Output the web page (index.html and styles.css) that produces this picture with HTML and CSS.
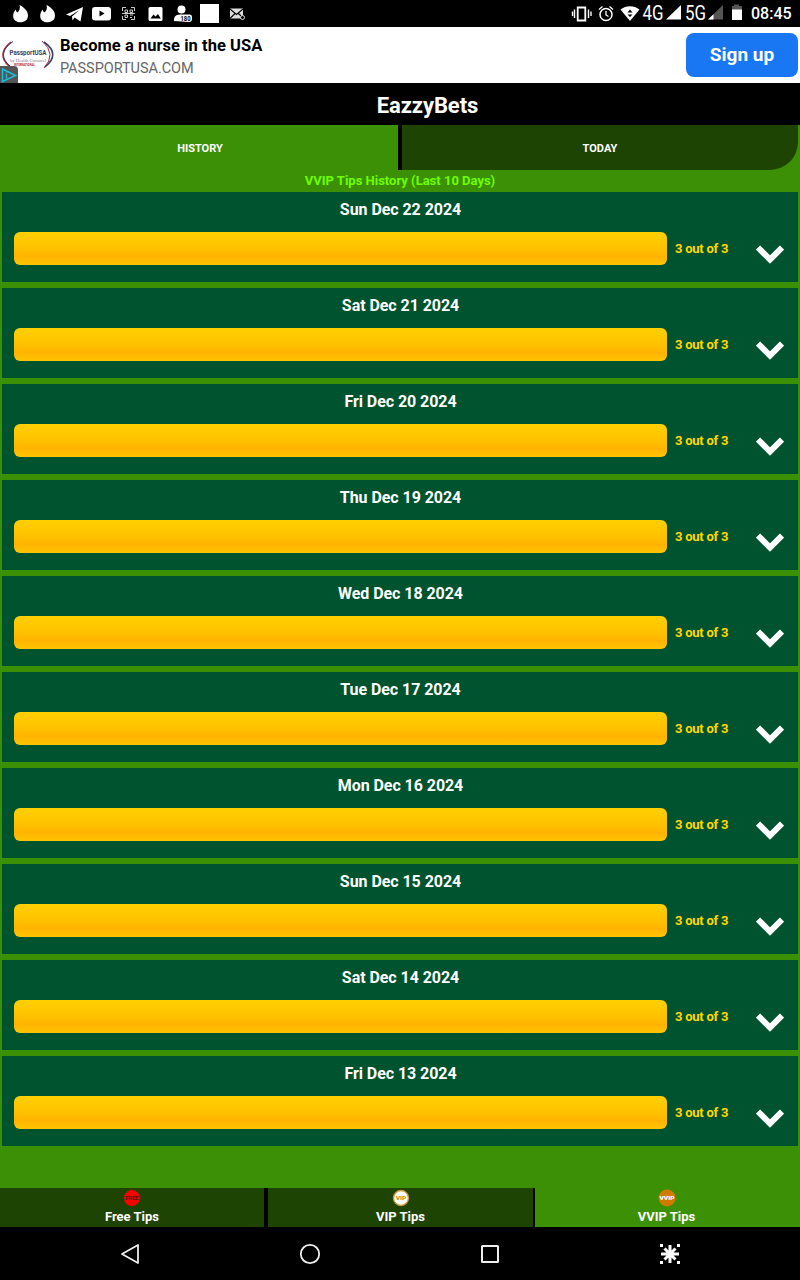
FILE: index.html
```
<!DOCTYPE html>
<html lang="en">
<head>
	<meta charset="UTF-8">
	<title>EazzyBets</title>
	<link rel="stylesheet" href="styles.css">
	<script>
		var DOC = document

		window.onload = function(){

			var oList = DOC.querySelector('#list')
				,days = [
					'Sun Dec 22 2024', 'Sat Dec 21 2024', 'Fri Dec 20 2024', 'Thu Dec 19 2024', 'Wed Dec 18 2024',
					'Tue Dec 17 2024', 'Mon Dec 16 2024', 'Sun Dec 15 2024', 'Sat Dec 14 2024', 'Fri Dec 13 2024'
				]
				,html = ''

			for (var i = 0; i < days.length; i++) {
				html += '<li class="card"><h3>' + days[i] + '</h3>'
					+ '<div class="row"><div class="bar"></div><span class="score">3 out of 3</span>'
					+ '<svg class="arrow" width="28" height="19" viewBox="0 0 28 19"><path d="M2 2.600 14 14.600 26 2.600" fill="none" stroke="#fff" stroke-width="6"/></svg>'
					+ '</div></li>'
			};
			oList.innerHTML = html
		}
	</script>
</head>
<body>
	<div class="status">
		<div class="notices">
			<svg viewBox="0 0 27 27"><path id="flame" d="M12.500 5C13.500 8.500 12.500 10.500 10.500 12.500 9.500 12 9 11 8.800 9.500 7 11.500 6.200 13.500 6.200 16 6.200 20 9.500 22.300 13.500 22.300S21 20 21 15.500C21 10.500 16.500 7 12.500 5Z" fill="#fff"/></svg>
			<svg viewBox="0 0 27 27"><use href="#flame"/></svg>
			<svg viewBox="0 0 27 27"><path d="M5 14.500 22 7 19.500 21.500 13.500 17.500 11.500 20.500 11 16.500 18.500 10 9 16Z" fill="#fff"/></svg>
			<svg viewBox="0 0 27 27"><rect x="4" y="7" width="19" height="13.500" rx="3" fill="#fff"/><path d="M11.500 10.500V16.500L16.500 13.500Z" fill="#000"/></svg>
			<svg viewBox="0 0 27 27" fill="none" stroke="#ccc"><path d="M7.500 11V7.500H11M16 7.500H19.500V11M19.500 16V19.500H16M11 19.500H7.500V16M10 10H12.500V12.500H10ZM15 10H17.500V12.500H15ZM10 15H12.500V17.500H10ZM15 15H18M15 17.500H17M7 13.500H20"/></svg>
			<svg viewBox="0 0 27 27"><rect x="6.500" y="7" width="14" height="14" rx="1.500" fill="#fff"/><path d="M8.500 18.500 11.500 14.500 13.500 16.500 16 14 18.800 18.500Z" fill="#000"/></svg>
			<svg viewBox="0 0 27 27"><circle cx="12.500" cy="9.500" r="4" fill="#fff"/><path d="M5 21C4.500 15.500 8 14.500 12.500 14.500H21Q23 14.500 23 17V19Q23 22 20 22Z" fill="#fff"/><text x="11.500" y="20.700" textLength="10" lengthAdjust="spacingAndGlyphs" font-size="6.500" font-weight="700" fill="#000">180</text></svg>
			<svg viewBox="0 0 27 27"><path d="M4 4H23V23H4Z" fill="#fff"/></svg>
			<svg viewBox="0 0 27 27"><path d="M7 8.500H20V18.500H7Z" fill="#ddd"/><path d="M7 9 13.500 14.500 20 9M7 18.500 12 13.500M15.500 13.500 20 18" fill="none" stroke="#000" stroke-width="1.100"/><circle cx="19.500" cy="17.500" r="2" fill="#000" stroke="#ddd"/></svg>
		</div>
		<svg class="signals" viewBox="0 0 172 27" width="172" height="27">
			<g fill="none" stroke="#fff">
				<path d="M6.700 7.500H14.300V20.500H6.700Z" stroke-width="1.800"/>
				<path d="M3.500 9.500V18M1.500 11.500V16M17.500 9.500V18M20 11.500V16" stroke-width="1.400"/>
				<circle cx="35" cy="14.500" r="6" stroke-width="1.500"/>
				<path d="M35 11V15L37.500 16.500M28 9.500 31.500 6.500M42 9.500 38.500 6.500" stroke-width="1.300"/>
			</g>
			<path d="M49.500 9.500C55 5 63 5 68.500 9.500L59 21Z" fill="#fff"/>
			<path d="M56.500 12.500 59 9.500 61.500 12.500ZM56.500 14.500H61.500L59 17Z" fill="#000"/>
			<text x="71.500" y="20.300" textLength="21" lengthAdjust="spacingAndGlyphs" class="net">4G</text>
			<path d="M110 5V19.500H95Z" fill="#fff"/>
			<text x="114" y="20.300" textLength="21" lengthAdjust="spacingAndGlyphs" class="net">5G</text>
			<path d="M152 5V19.500H137Z" fill="#555"/><path d="M142.500 14.300V19.500H137Z" fill="#fff"/>
			<path d="M161 6H163V4.500H168V6H171V10H161Z" fill="#555"/><path d="M161 9.500H171V20H161Z" fill="#fff"/>
		</svg>
		<span class="clock">08:45</span>
	</div>

	<div class="ad">
		<svg class="logo" viewBox="0 0 56 56" width="56" height="56">
			<g fill="none" stroke-width="1.600">
				<path d="M11 15Q-4 27 9 39" stroke="#a62a42"/><path d="M13 14.500Q-5 27 11 40" stroke="#334566" stroke-width="1"/>
				<path d="M44 15Q61 27 45 40" stroke="#334566"/><path d="M42 14Q57 27 44 41" stroke="#a62a42" stroke-width="1"/>
			</g>
			<text x="9.500" y="28" textLength="37" lengthAdjust="spacingAndGlyphs" font-size="7.800" font-weight="700" fill="#35415f">PassportUSA</text>
			<text x="10" y="35" textLength="36" lengthAdjust="spacingAndGlyphs" font-size="5" font-family="Liberation Serif" fill="#8a7580">by Health Carousel</text>
			<text x="14" y="39" textLength="21" lengthAdjust="spacingAndGlyphs" font-size="3.500" font-weight="700" fill="#b2283c">INTERNATIONAL</text>
			<path d="M0 39H14Q18 39 18 43V56H0Z" fill="#555"/>
			<path d="M2.500 42 15.500 48.500 2.500 54.500Z" fill="none" stroke="#18bdd8" stroke-width="1.600"/><path d="M6.500 46.800V51.500M6.500 44.500V45.700" stroke="#18bdd8" stroke-width="1.400"/>
		</svg>
		<div class="ad-text">
			<strong>Become a nurse in the USA</strong>
			<span>PASSPORTUSA.COM</span>
		</div>
		<a class="signup">Sign up</a>
	</div>

	<h1 class="header">EazzyBets</h1>

	<div class="tabs">
		<div class="tab active">HISTORY</div>
		<div class="tab-right"><div class="tab">TODAY</div></div>
	</div>

	<h2 class="title">VVIP Tips History (Last 10 Days)</h2>
	<ul id="list"></ul>

	<div class="menu">
		<div class="item">
			<svg viewBox="0 0 18 18"><circle cx="9" cy="9" r="7.500" fill="#f00" stroke="#f00" stroke-width="1.500" stroke-dasharray="1.500 1"/><text x="2.500" y="11.200" textLength="13" lengthAdjust="spacingAndGlyphs" font-size="6" font-weight="900" fill="#511">FREE</text></svg>
			<span>Free Tips</span>
		</div>
		<div class="item">
			<svg viewBox="0 0 18 18"><circle cx="9" cy="9" r="7.500" fill="#fff" stroke="#c99735" stroke-width="1.400"/><text x="3.800" y="11.200" textLength="10.500" lengthAdjust="spacingAndGlyphs" font-size="6" font-weight="900" fill="#c98e10">VIP</text></svg>
			<span>VIP Tips</span>
		</div>
		<div class="item active">
			<svg viewBox="0 0 18 18"><circle cx="9" cy="9" r="8.500" fill="#d17a00"/><text x="1.500" y="11.200" textLength="15" lengthAdjust="spacingAndGlyphs" font-size="6" font-weight="900" fill="#fff">VVIP</text></svg>
			<span>VVIP Tips</span>
		</div>
	</div>

	<div class="navbar">
		<svg viewBox="0 0 24 24" fill="none" stroke="#eee" stroke-width="1.800" stroke-linejoin="round"><path d="M20 3V21L4 12Z"/></svg>
		<svg viewBox="0 0 24 24" fill="none" stroke="#eee" stroke-width="1.800"><circle cx="12" cy="12" r="9.200"/></svg>
		<svg viewBox="0 0 24 24" fill="none" stroke="#eee" stroke-width="2"><rect x="4" y="4" width="16" height="16" rx=".5"/></svg>
		<svg viewBox="0 0 24 24" stroke="#fff" stroke-width="3"><path d="M12 3V21M3 12H21M6.500 6.500 17.500 17.500M17.500 6.500 6.500 17.500"/><path d="M2 3.500H5M19 3.500H22M2 20.500H5M19 20.500H22"/></svg>
	</div>
</body>
</html>
```
FILE: styles.css
```
body,ul,h1,h2,h3{margin: 0;padding: 0;}
li{list-style: none;}
svg{display: block; flex: none;}
body{width: 800px; height: 1280px; overflow: hidden; display: flex; flex-direction: column; background: #3c9005; font-family: Roboto, sans-serif; color: #fff;}

.status{display: flex; align-items: center; height: 27px; background: #000;}
.notices{display: flex; margin-left: 7px;}
.notices svg{width: 27px; height: 27px;}
.signals{margin-left: 321px;}
.net{font-size: 21px; fill: #fff; font-weight: 400;}
.clock{margin-left: 8px; font-size: 16px; line-height: 27px; font-weight: 500;}

.ad{display: flex; align-items: center; height: 56px; background: #fff;}
.ad-text{display: flex; flex-direction: column; flex: 1; margin-left: 4px; padding-top: 4px; color: #000;}
.ad-text strong{font-size: 16.500px; line-height: 22px; font-weight: 700; letter-spacing: .04px;}
.ad-text span{font-size: 14.500px; line-height: 23px; color: #666; letter-spacing: -.05px;}
.signup{width: 112px; height: 44px; margin-right: 2px; border-radius: 8px; background: #1977f3; color: #fff; font-size: 19px; line-height: 44px; font-weight: 700; text-align: center;}

.header{height: 42px; padding-left: 55px; background: #000; font-size: 22px; line-height: 46px; font-weight: 700; letter-spacing: -.1px; text-align: center;}

.tabs{display: flex; height: 45px;}
.tab{flex: 1; background: #1e4404; font-size: 11px; line-height: 47px; font-weight: 700; text-align: center; height: 45px;}
.tab.active{flex: none; width: 398px; padding-left: 2px; box-sizing: border-box; background: #3c9005;}
.tab-right{display: flex; flex: 1; border-left: 4px solid #000; padding-right: 2px;}
.tab-right .tab{border-radius: 0 0 28px 0;}

.title{height: 22px; color: #6cff00; font-size: 13px; line-height: 22px; font-weight: 700; text-align: center;}

#list{display: flex; flex-direction: column; gap: 6px; padding: 0 2px; flex: 1;}
.card{height: 90px; background: #00532f;}
.card h3{height: 40px; padding-left: 1px; font-size: 16px; line-height: 35px; font-weight: 700; letter-spacing: -.06px; text-align: center;}
.row{display: flex; height: 33px; padding: 0 14px 0 12px;}
.bar{width: 653px; height: 33px; border-radius: 6px; background: linear-gradient(#ffd000, #ffc400 42%, #ffb400 76%, #ffc400);}
.score{margin-left: 8px; color: #ffd700; font-size: 13px; line-height: 33px; font-weight: 700; letter-spacing: -.25px;}
.arrow{margin: 13px 0 0 auto;}

.menu{display: grid; grid-template-columns: 264px 4px 265px 2px 265px; height: 39px; background: #000;}
.item{display: flex; flex-direction: column; align-items: center; background: #1e4404; font-size: 13px; line-height: 16px; font-weight: 700;}
.item svg{width: 18px; height: 18px; margin: 1px 0 2px;}
.item:nth-child(2){grid-column: 3;}
.item:nth-child(3){grid-column: 5; padding-right: 2px;}
.item.active{background: #3c9005;}

.navbar{display: grid; grid-template-columns: repeat(4, 180px); justify-content: center; justify-items: center; align-items: center; height: 53px; background: #000;}
.navbar svg{width: 24px; height: 24px;}
```
